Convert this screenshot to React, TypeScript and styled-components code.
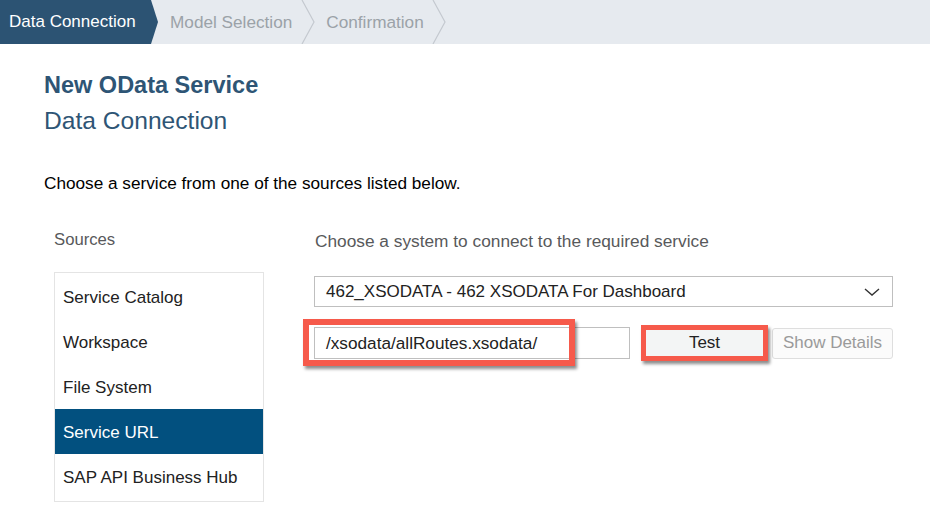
import React from "react";
import styled, { createGlobalStyle } from "styled-components";

const Global = createGlobalStyle`
  html, body { margin: 0; padding: 0; background: #ffffff; }
  body { font-family: "Liberation Sans", Arial, sans-serif; color: #000; }
`;

const Page = styled.div`
  width: 930px;
  height: 526px;
  overflow: hidden;
  background: #fff;
`;

const StepBar = styled.div`
  height: 44px;
  background: #e6eaef;
  display: flex;
  align-items: center;
`;

const ActiveStep = styled.div`
  height: 44px;
  width: 158px;
  box-sizing: border-box;
  padding-left: 9px;
  display: flex;
  align-items: center;
  background: #2c5373;
  color: #fff;
  font-size: 17px;
  clip-path: polygon(0 0, 151px 0, 158px 22px, 151px 44px, 0 44px);
`;

const Step = styled.div<{ $ml: number }>`
  margin-left: ${(p) => p.$ml}px;
  color: #9ba2a8;
  font-size: 17.2px;
  display: flex;
  align-items: center;
  height: 44px;
`;

const Chevron = styled.svg<{ $ml: number }>`
  margin-left: ${(p) => p.$ml}px;
  width: 14px;
  height: 44px;
  flex: none;
`;

const Content = styled.div`
  padding: 26px 44px 0 44px;
`;

const Title = styled.h1`
  margin: 0;
  font-size: 23.5px;
  line-height: 31px;
  font-weight: bold;
  color: #2e5575;
`;

const Subtitle = styled.h2`
  margin: 0;
  font-size: 24.6px;
  line-height: 39px;
  font-weight: normal;
  color: #2e5575;
`;

const Description = styled.p`
  margin: 33px 0 0 0;
  font-size: 17.2px;
  line-height: 20px;
  color: #000;
`;

const Columns = styled.div`
  display: flex;
  margin-top: 37px;
  gap: 50px;
  padding-left: 10px;
`;

const LeftCol = styled.div`
  width: 210px;
  flex: none;
`;

const RightCol = styled.div`
  width: 579px;
  flex: none;
`;

const Label = styled.div`
  font-size: 16.7px;
  line-height: 20px;
  color: #58595b;
`;

const RightLabel = styled(Label)`
  margin-top: 1px;
  margin-left: 1px;
  font-size: 17.3px;
`;

const SourceList = styled.div`
  margin-top: 22px;
  border: 1px solid #e4e4e4;
  padding: 1px 0 2px 0;
`;

const SourceItem = styled.div<{ $selected?: boolean }>`
  height: 45px;
  display: flex;
  align-items: center;
  padding-top: 2px;
  box-sizing: border-box;
  padding-left: 8px;
  font-size: 17px;
  background: ${(p) => (p.$selected ? "#02507f" : "transparent")};
  color: ${(p) => (p.$selected ? "#fff" : "#222")};
`;

const Select = styled.div`
  margin-top: 25px;
  height: 31px;
  box-sizing: border-box;
  border: 1px solid #bfbfbf;
  display: flex;
  align-items: center;
  justify-content: space-between;
  padding: 0 12px 0 11px;
  font-size: 17px;
  color: #222;
`;

const Row = styled.div`
  position: relative;
  margin-top: 20px;
  display: flex;
  align-items: center;
  height: 32px;
`;

const UrlInput = styled.div`
  width: 316px;
  height: 32px;
  box-sizing: border-box;
  border: 1px solid #bfbfbf;
  display: flex;
  align-items: center;
  padding-left: 11px;
  font-size: 17.2px;
  color: #222;
`;

const Button = styled.div<{ $disabled?: boolean; $ml: number }>`
  margin-left: ${(p) => p.$ml}px;
  width: 121px;
  height: 31px;
  box-sizing: border-box;
  border: 1px solid ${(p) => (p.$disabled ? "#dedede" : "#c8c8c8")};
  border-radius: 3px;
  background: ${(p) => (p.$disabled ? "#fbfbfb" : "#f3f5f5")};
  color: ${(p) => (p.$disabled ? "#9a9a9a" : "#222")};
  font-size: 17px;
  display: flex;
  align-items: center;
  justify-content: center;
`;

const Highlight = styled.div<{ $l: number; $t: number; $w: number; $h: number; $b: number }>`
  position: absolute;
  left: ${(p) => p.$l}px;
  top: ${(p) => p.$t}px;
  width: ${(p) => p.$w}px;
  height: ${(p) => p.$h}px;
  box-sizing: border-box;
  border: ${(p) => p.$b}px solid #f65a4b;
  box-shadow: 2px 3px 3px rgba(0, 0, 0, 0.45);
  pointer-events: none;
`;

const ChevronLine = () => (
  <polyline points="1,0 13,22 1,44" fill="none" stroke="#c4c9cf" strokeWidth="1.2" />
);

export default function App() {
  return (
    <Page>
      <Global />
      <StepBar>
        <ActiveStep>Data Connection</ActiveStep>
        <Step $ml={12}>Model Selection</Step>
        <Chevron $ml={9} viewBox="0 0 14 44"><ChevronLine /></Chevron>
        <Step $ml={11}>Confirmation</Step>
        <Chevron $ml={8} viewBox="0 0 14 44"><ChevronLine /></Chevron>
      </StepBar>
      <Content>
        <Title>New OData Service</Title>
        <Subtitle>Data Connection</Subtitle>
        <Description>Choose a service from one of the sources listed below.</Description>
        <Columns>
          <LeftCol>
            <Label>Sources</Label>
            <SourceList>
              <SourceItem>Service Catalog</SourceItem>
              <SourceItem>Workspace</SourceItem>
              <SourceItem>File System</SourceItem>
              <SourceItem $selected>Service URL</SourceItem>
              <SourceItem>SAP API Business Hub</SourceItem>
            </SourceList>
          </LeftCol>
          <RightCol>
            <RightLabel>Choose a system to connect to the required service</RightLabel>
            <Select>
              <span>462_XSODATA - 462 XSODATA For Dashboard</span>
              <svg width="16" height="8" viewBox="0 0 16 8">
                <polyline points="1,1 8,7 15,1" fill="none" stroke="#333" strokeWidth="1.4" />
              </svg>
            </Select>
            <Row>
              <UrlInput>/xsodata/allRoutes.xsodata/</UrlInput>
              <Button $ml={14}>Test</Button>
              <Button $ml={7} $disabled>Show Details</Button>
              <Highlight $l={-11} $t={-8} $w={272} $h={47} $b={6} />
              <Highlight $l={327} $t={-2} $w={127} $h={36} $b={5} />
            </Row>
          </RightCol>
        </Columns>
      </Content>
    </Page>
  );
}
